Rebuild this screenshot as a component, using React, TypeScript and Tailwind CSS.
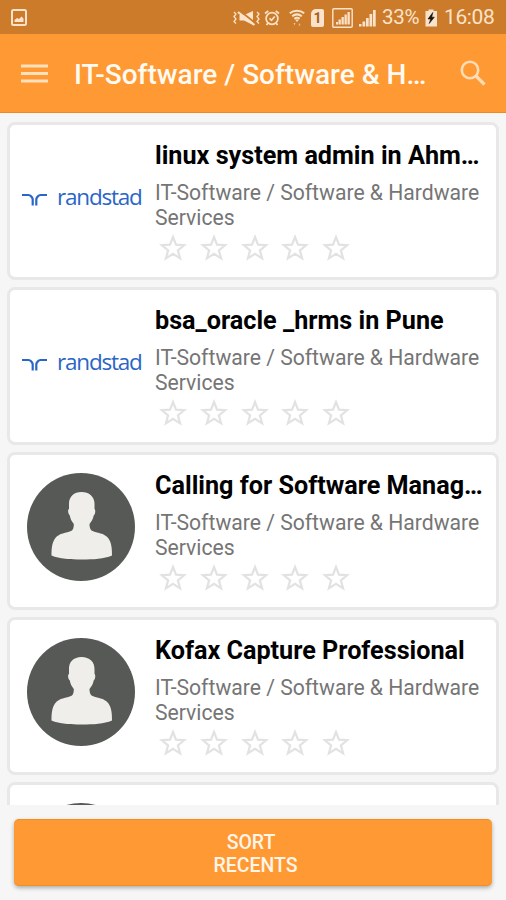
type Job = {
  title: string;
  logo: "randstad" | "avatar";
}

const CATEGORY = "IT-Software / Software & Hardware Services";

const jobs: Job[] = [
  { title: "linux system admin in Ahm…", logo: "randstad" },
  { title: "bsa_oracle _hrms in Pune", logo: "randstad" },
  { title: "Calling for Software Manag…", logo: "avatar" },
  { title: "Kofax Capture Professional", logo: "avatar" },
  { title: "Manual Programmer Prof…", logo: "avatar" },
];

function StatusBar() {
  return (
    <div className="flex h-[34px] shrink-0 items-center bg-[#cb7b29] pl-[11px] pr-[10px] pt-px text-[#fbe3cb]">
      <svg width="16" height="17" viewBox="0 0 16 17" fill="none">
        <rect x="1" y="1" width="14" height="15" rx="1.5" stroke="currentColor" strokeWidth="2" />
        <path d="M3.500 13v-2l2.500-2 2 1 2.500-2.500 2 2V13z" fill="currentColor" />
      </svg>
      <div className="ml-auto flex items-center">
        {/* vibrate / muted */}
        <svg width="27" height="18" viewBox="0 0 27 18" fill="none" stroke="currentColor">
          <path d="M1 3l2 2-2 2.500 2 2.500-2 2.500 2 2M24 3l2 2-2 2.500 2 2.500-2 2.500 2 2" strokeWidth="1.300" />
          <path d="M6.500 6h4.500L20 2v14l-9-4.500H6.500z" fill="currentColor" stroke="none" />
          <path d="M6.500 1.500l15 12" stroke="#cb7b29" strokeWidth="1.800" />
          <path d="M5 3l16.500 13" strokeWidth="2.200" />
        </svg>
        <svg className="ml-[4px]" width="16" height="18" viewBox="0 0 16 18" fill="none" stroke="currentColor" strokeWidth="1.700">
          <circle cx="8" cy="9.500" r="5.900" />
          <path d="M1 4.500L4.300 1.800M15 4.500l-3.300-2.700M5.500 9.300l2 2 3.200-3.800M4 14l-1.500 2M12 14l1.500 2" />
        </svg>
        <svg className="ml-[9px]" width="16" height="18" viewBox="0 0 16 18" fill="none" stroke="currentColor" strokeWidth="2">
          <path d="M.8 4.300c4-3.300 10.400-3.300 14.400 0M3.200 7.200c3-2.300 6.600-2.300 9.600 0M5.300 9.800c1.700-1.200 3.700-1.200 5.400 0" />
          <path d="M6 10.500h4L8 13z" fill="currentColor" stroke="none" />
          <path d="M4.500 14l1 2.500 1-2.500zM9.500 16.500l1-2.500 1 2.500z" fill="currentColor" stroke="none" opacity=".7" />
        </svg>
        <div className="ml-[6px] flex h-[18px] w-[13px] items-center justify-center rounded-[2px] rounded-tl-[5px] bg-current">
          <span className="text-[14px] leading-none font-bold text-[#a7601c]">1</span>
        </div>
        <svg className="ml-[8px]" width="21" height="20" viewBox="0 0 21 20" fill="currentColor">
          <rect x=".8" y=".8" width="19.400" height="18.400" rx="1" fill="none" stroke="currentColor" strokeWidth="1.400" />
          <path d="M4 14h2v2.500H4zM6.500 11.500h2.300v5H6.500zM9.500 9h2.300v7.500H9.500zM12.500 6.500h2.300v10h-2.300zM15.500 4h2.300v12.500h-2.300z" />
        </svg>
        <svg className="ml-[6px]" width="18" height="18" viewBox="0 0 18 18" fill="currentColor">
          <path d="M0 15h2.500v2.500H0zM3.500 12.500h2.700v5H3.500zM7 9h2.700v8.500H7zM10.500 5h2.700v12.500h-2.700zM14 1h2.700v16.500H14z" />
        </svg>
        <span className="ml-[5px] w-[39px] text-[20.500px] leading-none tracking-[-0.3px]">33%</span>
        <svg className="ml-[4px]" width="12" height="18" viewBox="0 0 12 18">
          <path d="M3.500 .5h5V2H12V17.500H0.500V2h3z" fill="currentColor" />
          <path d="M7.800 3.500L3 10h2.800L4.200 14.500 9.300 8.200H6.700z" fill="#1b1209" stroke="#1b1209" strokeWidth=".6" />
        </svg>
        <span className="ml-[7px] w-[52px] text-[21px] leading-none tracking-[-0.4px]">16:08</span>
      </div>
    </div>
  );
}

function AppBar() {
  return (
    <header className="flex h-[79px] shrink-0 items-center border-b border-[#f08a1c] bg-[#ff9933] pl-[21px] pr-[20px]">
      <svg width="27" height="20" viewBox="0 0 27 20" stroke="#ffe0bd" strokeWidth="3">
        <path d="M0 3h27M0 10.500h27M0 18h27" />
      </svg>
      <h1 className="ml-[26px] pt-[3px] text-[28px] leading-none font-medium whitespace-nowrap text-[#fffaf2]">
        IT-Software / Software &amp; H…
      </h1>
      <svg className="ml-auto" width="26" height="26" viewBox="0 0 26 26" fill="none" stroke="#ffdcb5">
        <circle cx="10" cy="10" r="8.200" strokeWidth="2.600" />
        <path d="M16 16l8.500 8.500" strokeWidth="3.200" />
      </svg>
    </header>
  );
}

function RandstadLogo() {
  return (
    <div className="flex h-[126px] items-center pl-[2px] text-[#2a66c8]">
      <svg className="mt-[4px]" width="25" height="13" viewBox="0 0 25 13" fill="none" stroke="currentColor" strokeWidth="2.200">
        <path d="M0 2h6.500q1.500 0 2.500 1.200l1 1.300q.7.900.7 2V12.500" />
        <path d="M25 2h-6.500q-1.500 0-2.500 1.200l-1 1.300q-.7.900-.7 2V12.500" />
      </svg>
      <span className="ml-[10px] font-['Open_Sans',sans-serif] text-[22.500px] leading-none tracking-[-1.2px]">randstad</span>
    </div>
  );
}

function Avatar() {
  return (
    <svg className="ml-[7px] mt-[9px]" width="109" height="109" viewBox="0 0 109 109">
      <circle cx="54" cy="54" r="54" fill="#565956" />
      <path
        d="M54.500 19c-8 0-13 5-12.500 13v4c-1.500.5-1 5 .8 6.500.6 3.500 2 6 4 8.500 0 3-.3 5-1.800 6.500-6 3-12.500 2-17 8-3.500 5-3.500 12-3.500 17 8 3.500 19 4 30.500 4s22-.5 30-4c0-5 0-12-3.500-17-4.500-6-11-5-17-8-1.500-1.500-2-3.500-2-6.500 2-2.500 3.500-5 4.200-8.500 1.800-1.500 2-6 .8-6.500v-4c.5-8-5-13-13-13z"
        fill="#efeeea"
      />
    </svg>
  );
}

function Stars() {
  return (
    <div className="ml-[4px] mt-[4px] flex gap-[12.800px]">
      {[1, 2, 3, 4, 5].map((n) => (
        <svg key={n} width="28" height="28" viewBox="0 0 28 28" fill="none" stroke="#e2e2e2" strokeWidth="2.200">
          <path d="M14 3l3 7.600 8.300.5-6.400 5.200 2.200 8.100-7.100-4.500-7.100 4.500 2.200-8.100-6.400-5.200 8.300-.5z" />
        </svg>
      ))}
    </div>
  );
}

function JobCard({ job }: { job: Job }) {
  return (
    <article className="flex h-[158px] shrink-0 rounded-[8px] border-[3px] border-[#e8e8e8] bg-white">
      <div className="w-[145px] shrink-0 pl-[10px] pt-[9px]">
        {job.logo === "randstad" ? <RandstadLogo /> : <Avatar />}
      </div>
      <div className="pt-[15px]">
        <h2 className="text-[25.200px] leading-[32px] font-bold whitespace-nowrap text-black">{job.title}</h2>
        <p className="mt-[8px] w-[335px] text-[21.150px] leading-[25px] text-[#757575]">{CATEGORY}</p>
        <Stars />
      </div>
    </article>
  );
}

export default function App() {
  return (
    <div className="flex h-[900px] w-[506px] flex-col overflow-hidden bg-[#f6f6f6] font-[Roboto,sans-serif]">
      <StatusBar />
      <AppBar />
      <main className="flex h-[692px] shrink-0 flex-col gap-[7px] overflow-hidden px-[7px] pt-[9px]">
        {jobs.map((job) => (
          <JobCard key={job.title} job={job} />
        ))}
      </main>
      <footer className="px-[14px] pt-[14px]">
        <button className="flex h-[67px] w-full flex-col items-center justify-center rounded-[5px] border-y border-[#f08f22] bg-[#ff9933] pt-[2px] text-[19.500px] leading-[23px] font-medium text-[#fff6e9] shadow-[0_2px_4px_rgba(0,0,0,0.3)]">
          <span className="pr-[4px]">SORT</span>
          <span className="pl-[5px]">RECENTS</span>
        </button>
      </footer>
    </div>
  );
}
